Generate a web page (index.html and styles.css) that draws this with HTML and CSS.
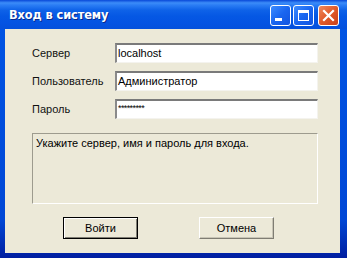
FILE: index.html
```html
<!DOCTYPE html>
<html lang="ru">
<head>
<meta charset="utf-8">
<title>Вход в систему</title>
<link rel="stylesheet" href="styles.css">
</head>
<body>
<div class="window">
  <div class="titlebar">
    <span class="title">Вход в систему</span>
    <div class="controls">
      <div class="ctl ctl-min"><svg width="21" height="21" viewBox="0 0 21 21"><rect x="5" y="13" width="7" height="3" fill="#fff"/></svg></div>
      <div class="ctl ctl-max"><svg width="21" height="21" viewBox="0 0 21 21"><rect x="5.5" y="5.5" width="10" height="10" fill="none" stroke="#fff" stroke-width="1"/><rect x="5" y="5" width="11" height="3" fill="#fff"/></svg></div>
      <div class="ctl ctl-close"><svg width="21" height="21" viewBox="0 0 21 21"><path d="M6 6 L15 15 M15 6 L6 15" stroke="#fff" stroke-width="2.2" stroke-linecap="square"/></svg></div>
    </div>
  </div>
  <div class="client">
    <div class="form">
      <label class="lbl">Сервер</label>
      <div class="field">localhost</div>
      <label class="lbl">Пользователь</label>
      <div class="field">Администратор</div>
      <label class="lbl">Пароль</label>
      <div class="field pwd">*********</div>
    </div>
    <div class="message">Укажите сервер, имя и пароль для входа.</div>
    <div class="buttons">
      <div class="btn btn-default">Войти</div>
      <div class="btn">Отмена</div>
    </div>
  </div>
</div>
</body>
</html>
```

FILE: styles.css
```css
html, body {
  margin: 0;
  padding: 0;
  background: #000;
}
.window {
  width: 347px;
  height: 258px;
  display: flex;
  flex-direction: column;
  background: linear-gradient(to bottom, #0055e5, #0047d6 85%, #001ea0);
  box-sizing: border-box;
  font-family: "Liberation Sans", Arial, sans-serif;
}
.titlebar {
  height: 29px;
  flex: none;
  display: flex;
  align-items: center;
  justify-content: space-between;
  padding: 0 8px 0 9px;
  background: linear-gradient(to bottom, #0848d8 0%, #3c8cf8 10%, #2a7cf4 18%, #0e62e8 35%, #0558e4 55%, #0453e2 80%, #0450dc 100%);
}
.title {
  color: #fff;
  font-family: "DejaVu Sans", sans-serif;
  font-weight: bold;
  font-size: 11.4px;
  text-shadow: 1px 1px 0 #0a2a8a;
  letter-spacing: -0.1px;
  margin-top: 1px;
}
.controls {
  display: flex;
  gap: 2px;
  margin-top: 2px;
}
.ctl {
  width: 21px;
  height: 21px;
  box-sizing: border-box;
  border: 1px solid #fff;
  border-radius: 3px;
  background: linear-gradient(135deg, #3d8cff 0%, #1a66f0 50%, #1254e0 100%);
  display: flex;
}
.ctl svg { margin: -1px; }
.ctl-close {
  background: linear-gradient(135deg, #f08a5e 0%, #e05a2a 50%, #c8401a 100%);
  margin-left: 2px;
}
.client {
  flex: 1;
  margin: 0 7px 5px 5px;
  background: #ece9d8;
  padding: 14px 22px 0 27px;
  font-size: 11px;
  color: #000;
}
.form {
  display: grid;
  grid-template-columns: 83px 203px;
  row-gap: 8px;
  align-items: center;
}
.lbl {
  font-size: 11px;
  color: #111;
}
.field {
  height: 20px;
  box-sizing: border-box;
  background: #fff;
  border-top: 2px solid #7a7a7a;
  border-left: 2px solid #8a8a8a;
  border-right: 1px solid #f4f3ee;
  border-bottom: 1px solid #f4f3ee;
  padding: 1px 0 0 1px;
  font-size: 11px;
  line-height: 15px;
}
.field.pwd {
  font-size: 9px;
  letter-spacing: -0.6px;
  line-height: 13px;
}
.message {
  margin-top: 14px;
  width: 286px;
  height: 71px;
  box-sizing: border-box;
  border-top: 1px solid #9d9b8e;
  border-left: 1px solid #9d9b8e;
  border-right: 1px solid #fff;
  border-bottom: 1px solid #fff;
  padding: 3px 3px;
  font-size: 11px;
}
.buttons {
  display: flex;
  gap: 61px;
  margin-top: 13px;
  padding-left: 31px;
}
.btn {
  width: 75px;
  height: 22px;
  box-sizing: border-box;
  border: 1px solid;
  border-color: #fff #7f7d73 #7f7d73 #fff;
  box-shadow: inset -1px -1px 0 #c8c5b6;
  display: flex;
  align-items: center;
  justify-content: center;
  font-size: 11px;
  background: #ece9d8;
}
.btn-default {
  border: 1px solid #000;
  box-shadow: inset 1px 1px 0 #fff, inset -1px -1px 0 #7f7d73;
}
```
